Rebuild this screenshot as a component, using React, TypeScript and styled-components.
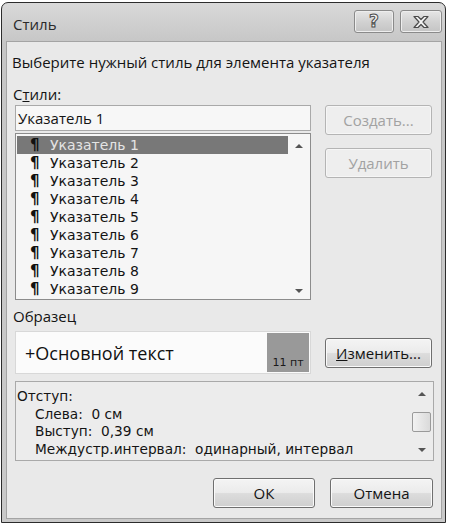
import * as React from 'react';
import styled, { createGlobalStyle } from 'styled-components';

const GlobalStyle = createGlobalStyle`
  html, body {
    margin: 0;
    padding: 0;
    background: #ffffff;
  }
  body {
    font-family: "Open Sans", "Noto Sans", "DejaVu Sans", sans-serif;
    font-size: 15px;
    color: #141414;
  }
`;

const rowFont = `"DejaVu Sans", "Liberation Sans", sans-serif`;

const Window = styled.div`
  box-sizing: border-box;
  width: 445px;
  height: 521px;
  margin: 2px 0 0 1px;
  border: 1px solid #2c2c2c;
  border-radius: 7px 7px 0 0;
  background: linear-gradient(to bottom, #d9d9d9, #c6c6c6 40px, #c9c9c9);
  padding: 0 3px 3px 4px;
  display: flex;
  flex-direction: column;
`;

const TitleBar = styled.div`
  height: 38px;
  flex: none;
  display: flex;
  align-items: center;
  justify-content: space-between;
  padding: 0 0 0 7px;
`;

const Title = styled.div`
  font-size: 15px;
  color: #2a2a2a;
  margin-top: 4px;
`;

const Controls = styled.div`
  display: flex;
  gap: 6px;
  align-self: flex-start;
  margin-top: 7px;
`;

const CaptionButton = styled.div<{ $w: number }>`
  box-sizing: border-box;
  width: ${p => p.$w}px;
  height: 23px;
  border: 1px solid #8a8a8a;
  border-radius: 3px;
  background: linear-gradient(to bottom, #e6e6e6, #d2d2d2 50%, #c4c4c4);
  box-shadow: inset 0 0 0 1px #eeeeee;
  display: flex;
  align-items: center;
  justify-content: center;
`;

const HelpGlyph = styled.span`
  font-family: "DejaVu Sans", sans-serif;
  font-weight: bold;
  font-size: 17px;
  line-height: 1;
  color: #f2f2f2;
  -webkit-text-stroke: 1px #4a4a4a;
`;

const Client = styled.div`
  flex: 1;
  background: #e9e9e9;
  border: 1px solid #a4a4a4;
  padding: 0 7px 0 5px;
  display: flex;
  flex-direction: column;
`;

const Prompt = styled.div`
  margin-top: 11px;
  line-height: 18px;
`;

const Caption = styled.div<{ $top: number }>`
  margin-top: ${p => p.$top}px;
  margin-left: 1px;
  line-height: 18px;
`;

const Section = styled.div<{ $top: number }>`
  margin-top: ${p => p.$top}px;
  margin-left: 3px;
  display: flex;
  gap: 14px;
`;

const LeftCol = styled.div`
  width: 296px;
  display: flex;
  flex-direction: column;
  gap: 2px;
`;

const SideCol = styled.div<{ $center?: boolean }>`
  display: flex;
  flex-direction: column;
  justify-content: ${p => (p.$center ? 'center' : 'flex-start')};
  gap: 13px;
`;

const NameInput = styled.div`
  box-sizing: border-box;
  height: 26px;
  border: 1px solid #a9a9a9;
  background: #f7f7f7;
  padding: 0 2px;
  display: flex;
  align-items: center;
`;

const ListBox = styled.div`
  box-sizing: border-box;
  height: 167px;
  border: 1px solid #8c8c8c;
  background: #f6f6f6;
  display: flex;
  padding: 2px 1px 0 1px;
`;

const Items = styled.div`
  flex: 1;
  display: flex;
  flex-direction: column;
`;

const Item = styled.div<{ $selected?: boolean }>`
  height: 18px;
  line-height: 18px;
  display: flex;
  align-items: center;
  padding-left: 13px;
  font-family: ${rowFont};
  font-size: 14px;
  background: ${p => (p.$selected ? '#787878' : 'transparent')};
  color: ${p => (p.$selected ? '#e4e4e4' : '#141414')};
`;

const Pilcrow = styled.span`
  width: 20px;
  font-weight: bold;
  font-size: 15px;
  color: #111111;
`;

const ScrollBar = styled.div`
  width: 21px;
  display: flex;
  flex-direction: column;
  align-items: center;
  justify-content: space-between;
  padding: 8px 0 6px;
  box-sizing: border-box;
`;

const Arrow = styled.div<{ $down?: boolean }>`
  width: 0;
  height: 0;
  border-left: 4px solid transparent;
  border-right: 4px solid transparent;
  ${p => (p.$down ? 'border-top: 4px solid #555;' : 'border-bottom: 4px solid #555;')}
`;

const Thumb = styled.div`
  box-sizing: border-box;
  width: 19px;
  height: 20px;
  border: 1px solid #9a9a9a;
  border-radius: 2px;
  background: linear-gradient(to right, #f2f2f2, #dadada);
`;

const Button = styled.div<{ $disabled?: boolean; $w?: number }>`
  box-sizing: border-box;
  width: ${p => p.$w ?? 107}px;
  height: 30px;
  border: 1px solid ${p => (p.$disabled ? '#b4b4b4' : '#6f6f6f')};
  border-radius: 3px;
  background: ${p =>
    p.$disabled
      ? '#eeeeee'
      : 'linear-gradient(to bottom, #f4f4f4, #ebebeb 48%, #dcdcdc 52%, #cfcfcf)'};
  box-shadow: inset 0 0 0 1px ${p => (p.$disabled ? '#f6f6f6' : '#fafafa')};
  color: ${p => (p.$disabled ? '#a2a2a2' : '#141414')};
  display: flex;
  align-items: center;
  justify-content: center;
`;

const Preview = styled.div`
  box-sizing: border-box;
  width: 296px;
  height: 43px;
  border: 1px solid #d8d8d8;
  background: #fbfbfb;
  display: flex;
  padding: 1px;
`;

const SampleText = styled.div`
  flex: 1;
  display: flex;
  align-items: center;
  padding-left: 8px;
  font-size: 18px;
  color: #111;
`;

const SizeTag = styled.div`
  width: 42px;
  background: #999999;
  display: flex;
  align-items: flex-end;
  justify-content: center;
  padding-bottom: 3px;
  box-sizing: border-box;
  font-family: "DejaVu Sans", sans-serif;
  font-size: 11px;
  color: #1a1a1a;
`;

const Description = styled.div`
  box-sizing: border-box;
  margin: 7px 0 0 3px;
  height: 80px;
  border: 1px solid #a9a9a9;
  background: #ececec;
  display: flex;
`;

const DescText = styled.div`
  flex: 1;
  padding: 6px 0 0 1px;
  font-family: ${rowFont};
  font-size: 13.7px;
  overflow: hidden;
  white-space: nowrap;
`;

const DescLine = styled.div<{ $indent?: boolean }>`
  height: 17.7px;
  line-height: 17.7px;
  padding-left: ${p => (p.$indent ? 18 : 0)}px;
`;

const DescScroll = styled(ScrollBar)`
  width: 23px;
  padding: 10px 0 8px;
`;

const Footer = styled.div`
  margin-top: 17px;
  margin-right: 1px;
  display: flex;
  justify-content: flex-end;
  gap: 15px;
`;

const CloseIcon = () => (
  <svg width="20" height="14" viewBox="0 0 20 14">
    <path
      d="M3 1.5h4l3 3 3-3h4l-5 5.5 5 5.5h-4l-3-3-3 3H3l5-5.5z"
      fill="#f2f2f2"
      stroke="#4a4a4a"
      strokeWidth="1.2"
      strokeLinejoin="round"
    />
  </svg>
);

const styles = Array.from({ length: 9 }, (_, i) => `Указатель ${i + 1}`);

export default function App() {
  return (
    <>
      <GlobalStyle />
      <Window>
        <TitleBar>
          <Title>Стиль</Title>
          <Controls>
            <CaptionButton $w={40}>
              <HelpGlyph>?</HelpGlyph>
            </CaptionButton>
            <CaptionButton $w={42}>
              <CloseIcon />
            </CaptionButton>
          </Controls>
        </TitleBar>
        <Client>
          <Prompt>Выберите нужный стиль для элемента указателя</Prompt>
          <Caption $top={14}>
            С<u>т</u>или:
          </Caption>
          <Section $top={2}>
            <LeftCol>
              <NameInput>Указатель 1</NameInput>
              <ListBox>
                <Items>
                  {styles.map((name, i) => (
                    <Item key={name} $selected={i === 0}>
                      <Pilcrow>¶</Pilcrow>
                      {name}
                    </Item>
                  ))}
                </Items>
                <ScrollBar>
                  <Arrow />
                  <Arrow $down />
                </ScrollBar>
              </ListBox>
            </LeftCol>
            <SideCol>
              <Button $disabled>Создать...</Button>
              <Button $disabled>Удалить</Button>
            </SideCol>
          </Section>
          <Caption $top={7}>Образец</Caption>
          <Section $top={6}>
            <Preview>
              <SampleText>+Основной текст</SampleText>
              <SizeTag>11 пт</SizeTag>
            </Preview>
            <SideCol $center>
              <Button>
                <u>И</u>зменить...
              </Button>
            </SideCol>
          </Section>
          <Description>
            <DescText>
              <DescLine>Отступ:</DescLine>
              <DescLine $indent>Слева:&nbsp; 0 см</DescLine>
              <DescLine $indent>Выступ:&nbsp; 0,39 см</DescLine>
              <DescLine $indent>Междустр.интервал:&nbsp; одинарный, интервал</DescLine>
            </DescText>
            <DescScroll>
              <Arrow />
              <Thumb />
              <Arrow $down />
            </DescScroll>
          </Description>
          <Footer>
            <Button $w={102}>ОК</Button>
            <Button $w={103}>Отмена</Button>
          </Footer>
        </Client>
      </Window>
    </>
  );
}
